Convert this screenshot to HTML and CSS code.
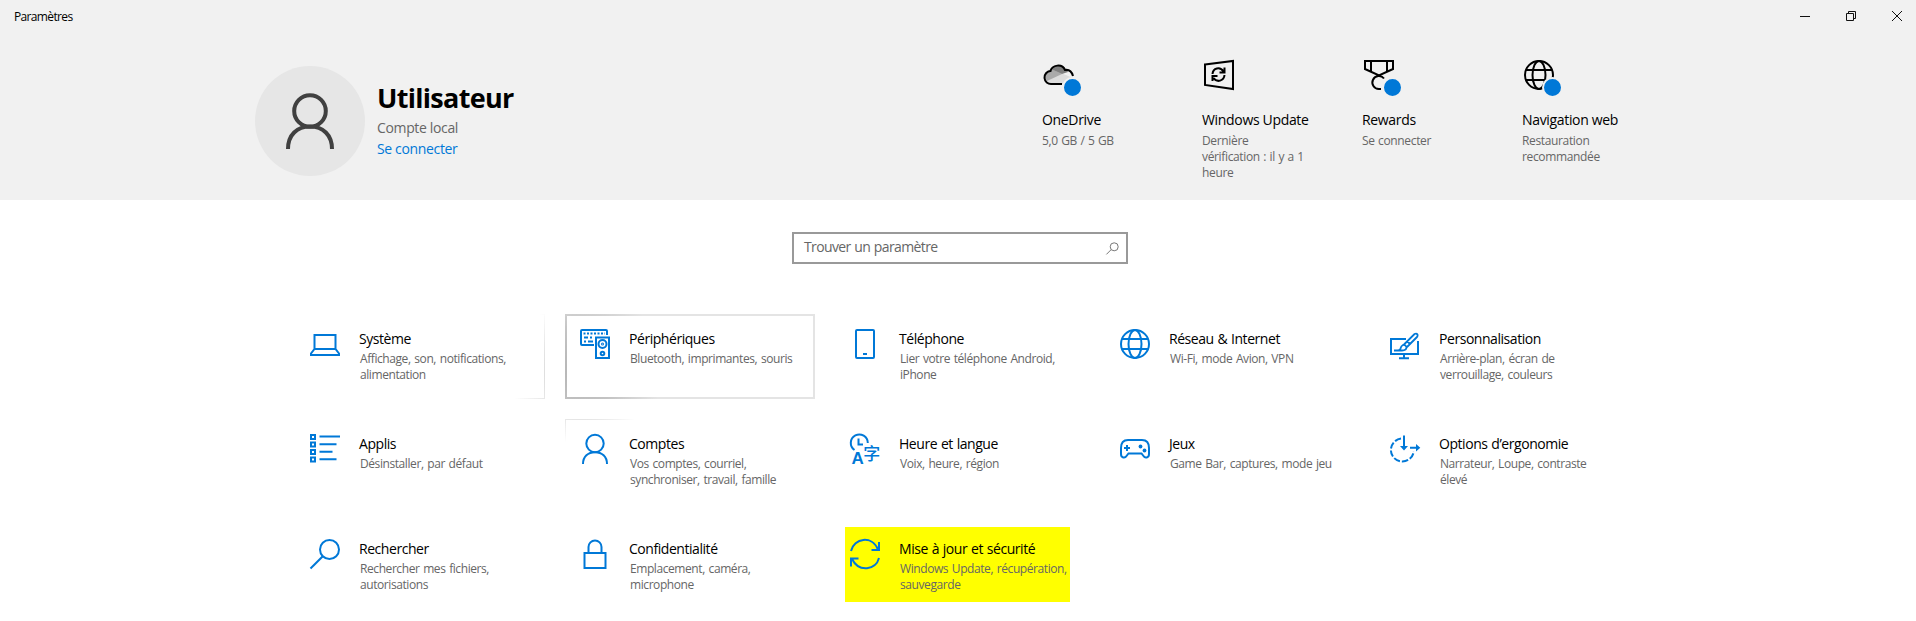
FILE: index.html
```html
<!DOCTYPE html>
<html lang="fr">
<head>
<meta charset="utf-8">
<title>Paramètres</title>
<link rel="stylesheet" href="styles.css">
</head>
<body>
<header class="header">
  <div class="titlebar">
    <span class="window-title">Paramètres</span>
    <div class="window-controls">
      <svg class="control" viewBox="0 0 10 10"><path d="M0 5.5H10"/></svg>
      <svg class="control" viewBox="0 0 10 10"><path d="M.5 2.5H7.5V9.5H.5ZM2.5 2.5V.5H9.5V7.5H7.5"/></svg>
      <svg class="control" viewBox="0 0 10 10"><path d="M0 0L10 10M10 0L0 10"/></svg>
    </div>
  </div>
  <div class="overview">
    <div class="account">
      <div class="avatar">
        <svg class="avatar-icon" viewBox="0 0 50 56"><circle cx="25" cy="18" r="15.8"/><path d="M3 56C3 42 12 33.5 25 33.5S47 42 47 56"/></svg>
      </div>
      <div class="account-text">
        <h1 class="account-name">Utilisateur</h1>
        <p class="account-type">Compte local</p>
        <a class="account-link">Se connecter</a>
      </div>
    </div>
    <div class="status-list">
      <div class="status">
        <div class="status-icon">
          <svg class="glyph" viewBox="0 0 30 30"><path class="cloud-light" d="M2 20L17 13L29 18L24 24H7Z"/><path class="cloud-mid" d="M1 18Q1 10 8 9L18 14L3 21Z"/><path class="cloud-dark" d="M7 9Q12 3 19 6L24 12L18 14Z"/><path d="M18 24H7.500A6.500 6.500 0 0 1 6.500 11C8 5 18 3 21 10Q27 9 29 16"/></svg>
          <span class="badge"></span>
        </div>
        <h2 class="status-title">OneDrive</h2>
        <p class="status-text">5,0 GB / 5 GB</p>
      </div>
      <div class="status">
        <div class="status-icon">
          <svg class="glyph" viewBox="0 0 30 30"><path d="M1 4.500L29 1V29L1 25Z"/><path d="M8.500 14C9 8 16 6 19.500 11.500M20.500 7.500V12.500H15.500M20.500 15C20 21 13 23 9.500 18M8.500 21V16H13.500"/></svg>
        </div>
        <h2 class="status-title">Windows Update</h2>
        <p class="status-text">Dernière<br>vérification : il y a 1<br>heure</p>
      </div>
      <div class="status">
        <div class="status-icon">
          <svg class="glyph" viewBox="0 0 30 30"><path d="M1 1H29V9L15 15.500L1 9ZM7 1V11M23 1V11M17 29H15A6.500 6.500 0 1 1 20 18.500"/></svg>
          <span class="badge"></span>
        </div>
        <h2 class="status-title">Rewards</h2>
        <p class="status-text">Se connecter</p>
      </div>
      <div class="status">
        <div class="status-icon">
          <svg class="glyph" viewBox="0 0 30 30"><circle cx="15" cy="15" r="14"/><ellipse cx="15" cy="15" rx="6.500" ry="14"/><path d="M2 10H28M2 20H28"/></svg>
          <span class="badge"></span>
        </div>
        <h2 class="status-title">Navigation web</h2>
        <p class="status-text">Restauration<br>recommandée</p>
      </div>
    </div>
  </div>
</header>
<main class="content">
  <div class="search">
    <span class="search-text">Trouver un paramètre</span>
    <svg class="search-icon" viewBox="0 0 13 13"><circle cx="8.200" cy="4.800" r="4"/><path d="M5.200 7.600L.4 12.400"/></svg>
  </div>
  <div class="tiles">
    <div class="tile reveal-left">
      <svg class="glyph" viewBox="0 0 30 30"><path d="M4.500 20V6H25.500V20M4.500 20H25.500L29 24.500V26H1V24.500Z"/></svg>
      <div><h3 class="tile-title">Système</h3><p class="tile-text">Affichage, son, notifications,<br>alimentation</p></div>
    </div>
    <div class="tile hovered">
      <svg class="glyph" viewBox="0 0 30 30"><path d="M14 16H2Q1 16 1 15V2Q1 1 2 1H26Q27 1 27 2V6"/><path d="M3.500 4.500H25" stroke-dasharray="2 1.500"/><path d="M4 8.500H8M10 8.500H12M4 12.500H6M8 12.500H13"/><path d="M16 8.500H29V29H16Z"/><circle cx="22.500" cy="15" r="4"/><circle cx="22.500" cy="15" r=".5"/><circle cx="22.500" cy="24.500" r="1.800"/></svg>
      <div><h3 class="tile-title">Périphériques</h3><p class="tile-text">Bluetooth, imprimantes, souris</p></div>
    </div>
    <div class="tile">
      <svg class="glyph" viewBox="0 0 30 30"><rect x="6" y="1" width="18" height="28" rx="1"/><path d="M13 25H17"/></svg>
      <div><h3 class="tile-title">Téléphone</h3><p class="tile-text">Lier votre téléphone Android,<br>iPhone</p></div>
    </div>
    <div class="tile">
      <svg class="glyph" viewBox="0 0 30 30"><circle cx="15" cy="15" r="14"/><ellipse cx="15" cy="15" rx="6.500" ry="14"/><path d="M2 10H28M2 20H28"/></svg>
      <div><h3 class="tile-title">Réseau &amp; Internet</h3><p class="tile-text">Wi-Fi, mode Avion, VPN</p></div>
    </div>
    <div class="tile">
      <svg class="glyph" viewBox="0 0 30 30"><path d="M16 10H1V25H28V12M14 25V29M9 29.200H19"/><path d="M4 21.500H12Q16.500 21.500 16.500 18Q15.500 15.500 13 16Q11 17 10.500 19.500Q10 21.500 7.500 21.500M14 15.500L24.500 5Q26.500 4 27.500 5.500Q28 7 27 8L17 18M17.500 12.500L20 15" stroke-width="1.800"/></svg>
      <div><h3 class="tile-title">Personnalisation</h3><p class="tile-text">Arrière-plan, écran de<br>verrouillage, couleurs</p></div>
    </div>
    <div class="tile">
      <svg class="glyph" viewBox="0 0 30 30"><path d="M1 1H5V5H1ZM1 8.500H5V12.500H1ZM1 16H5V20H1ZM1 23.500H5V27.500H1ZM9.500 2.500H30M9.500 10.300H26.500M9.500 17.800H22.500M9.500 25.300H26.500"/></svg>
      <div><h3 class="tile-title">Applis</h3><p class="tile-text">Désinstaller, par défaut</p></div>
    </div>
    <div class="tile reveal-below">
      <svg class="glyph" viewBox="0 0 30 30"><circle cx="15" cy="9.500" r="8.700"/><path d="M3 30C3 22.500 8 18.200 15 18.200S27 22.500 27 30"/></svg>
      <div><h3 class="tile-title">Comptes</h3><p class="tile-text">Vos comptes, courriel,<br>synchroniser, travail, famille</p></div>
    </div>
    <div class="tile">
      <svg class="glyph" viewBox="0 0 30 30"><path d="M4.500 16A8.500 8.500 0 1 1 17.800 9M8.500 4.500V10.500H13"/><text class="glyph-latin" x="1.500" y="30">A</text><text class="glyph-han" x="13.300" y="26.300">字</text></svg>
      <div><h3 class="tile-title">Heure et langue</h3><p class="tile-text">Voix, heure, région</p></div>
    </div>
    <div class="tile">
      <svg class="glyph" viewBox="0 0 30 30"><path d="M8 6H22C27 6 29 9 29 14V20C29 24 25 24.500 23.500 22L21.500 19.500H8.500L6.500 22C5 24.500 1 24 1 20V14C1 9 3 6 8 6Z"/><path d="M4 14H10M7 11V17"/><circle class="dot" cx="20.500" cy="12.500" r="1.900"/><circle class="dot" cx="24.500" cy="16.500" r="1.900"/></svg>
      <div><h3 class="tile-title">Jeux</h3><p class="tile-text">Game Bar, captures, mode jeu</p></div>
    </div>
    <div class="tile">
      <svg class="glyph" viewBox="0 0 30 30"><path d="M11 4.600A11.500 11.500 0 1 0 23.800 17.500" stroke-dasharray="6.500 2"/><path d="M14 1.500V14M20 13.800H28"/><path class="dot" d="M10 12H18L14 16.500ZM26 10L30.300 13.800L26 17.600Z"/></svg>
      <div><h3 class="tile-title">Options d’ergonomie</h3><p class="tile-text">Narrateur, Loupe, contraste<br>élevé</p></div>
    </div>
    <div class="tile">
      <svg class="glyph" viewBox="0 0 30 30"><circle cx="19.500" cy="10.500" r="9.500"/><path d="M12.800 17.200L.5 29.500"/></svg>
      <div><h3 class="tile-title">Rechercher</h3><p class="tile-text">Rechercher mes fichiers,<br>autorisations</p></div>
    </div>
    <div class="tile">
      <svg class="glyph" viewBox="0 0 30 30"><path d="M4.500 14H25.500V29H4.500ZM8.500 14V8A6.500 6.500 0 0 1 21.500 8V14"/></svg>
      <div><h3 class="tile-title">Confidentialité</h3><p class="tile-text">Emplacement, caméra,<br>microphone</p></div>
    </div>
    <div class="tile marked">
      <svg class="glyph" viewBox="0 0 30 30"><path d="M1 12C4 -1 22 -4 28 10.500M29 3V11H21.500M29 19C26 31 9 34 2 20M1 27.500V19.500H8.500"/></svg>
      <div><h3 class="tile-title">Mise à jour et sécurité</h3><p class="tile-text">Windows Update, récupération,<br>sauvegarde</p></div>
    </div>
  </div>
</main>
</body>
</html>
```
FILE: styles.css
```css
* { box-sizing: border-box; }
body {
  margin: 0;
  height: 621px;
  overflow: hidden;
  background: #fff;
  color: #000;
  font-family: "Open Sans", "Noto Sans", sans-serif;
}
h1, h2, h3, p { margin: 0; font-weight: 400; }
svg { display: block; flex: none; overflow: visible; fill: none; }

.header { height: 200px; background: #f1f1f1; }
.titlebar {
  display: flex;
  justify-content: space-between;
  height: 32px;
  padding: 0 14px;
}
.window-title { font-size: 12px; line-height: 34px; letter-spacing: -0.65px; }
.window-controls { display: flex; gap: 36px; padding-top: 11px; }
.control { width: 10px; height: 10px; stroke: #111; stroke-width: 1; }

.overview { display: flex; justify-content: space-between; padding: 28px 275px 0 255px; }
.account { display: flex; gap: 12px; padding-top: 6px; }
.avatar {
  display: flex;
  justify-content: center;
  width: 110px;
  height: 110px;
  padding-top: 27px;
  border-radius: 50%;
  background: #e6e6e6;
}
.avatar-icon { width: 50px; height: 56px; stroke: #404040; stroke-width: 4; }
.account-text { padding-top: 14px; }
.account-name { font-size: 27px; line-height: 36px; font-weight: 700; letter-spacing: -0.7px; }
.account-type, .account-link { display: block; font-size: 14px; line-height: 20px; letter-spacing: -0.35px; }
.account-type { margin-top: 2px; color: #666; }
.account-link { margin-top: 1px; color: #0078d7; }

.status-list { display: flex; gap: 40px; }
.status { width: 120px; padding-left: 1px; white-space: nowrap; }
.status-icon { position: relative; width: 32px; height: 50px; padding-left: 2px; color: #000; }
.badge {
  position: absolute;
  left: 20px;
  top: 17px;
  width: 21px;
  height: 21px;
  border: 2px solid #f1f1f1;
  border-radius: 50%;
  background: #0078d7;
}
.status-title { font-size: 14px; line-height: 20px; letter-spacing: -0.33px; }
.status-text { margin-top: 3px; font-size: 12px; line-height: 16px; letter-spacing: -0.35px; word-spacing: 0.7px; color: #666; }
.cloud-light { fill: #ddd; stroke: none; }
.cloud-mid { fill: #aaa; stroke: none; }
.cloud-dark { fill: #808080; stroke: none; }

.glyph { width: 30px; height: 30px; stroke: currentColor; stroke-width: 2; }
.dot { fill: currentColor; stroke: none; }
.glyph-latin { font: 700 17px "Liberation Sans", sans-serif; fill: currentColor; stroke: none; }
.glyph-han { font: 500 17px "Noto Sans CJK SC", sans-serif; fill: currentColor; stroke: none; }

.content { padding-top: 32px; }
.search {
  display: flex;
  align-items: center;
  justify-content: space-between;
  width: 336px;
  height: 32px;
  margin-left: 792px;
  padding: 0 7px 0 10px;
  border: 2px solid #999;
  color: #666;
}
.search-text { padding-bottom: 2px; font-size: 14px; line-height: 20px; letter-spacing: -0.62px; word-spacing: 0.6px; }
.search-icon { width: 13px; height: 13px; stroke: #777; stroke-width: 1; }

.tiles {
  display: grid;
  grid-template-columns: repeat(5, 250px);
  grid-auto-rows: 85px;
  gap: 20px;
  padding: 50px 0 0 295px;
}
.tile {
  display: flex;
  gap: 20px;
  padding: 14px;
  border: 1px solid transparent;
  white-space: nowrap;
}
.tile .glyph { color: #0078d7; }
.tile-title { margin-left: -1px; font-size: 14px; line-height: 20px; letter-spacing: -0.45px; word-spacing: 0.6px; }
.tile-text { margin-top: 2px; font-size: 12px; line-height: 16px; letter-spacing: -0.42px; word-spacing: 1px; color: #666; }

/* Pointer light spreading over the hovered tile and its neighbours */
.hovered {
  padding: 13px;
  border: 2px solid;
  border-image: radial-gradient(circle 85px at 12px 56px, #b4b4b4, #c4c4c4 50%, #e4e4e4) 2;
}
.reveal-left { border-image: radial-gradient(circle 70px at 284px 58px, #c0c0c0, transparent) 1; }
.reveal-below { border-image: radial-gradient(circle 74px at 15px -49px, #b0b0b0, transparent) 1; }

.marked { background: linear-gradient(#ff0, #ff0) 9px 2px / 225px 75px no-repeat; }
```
